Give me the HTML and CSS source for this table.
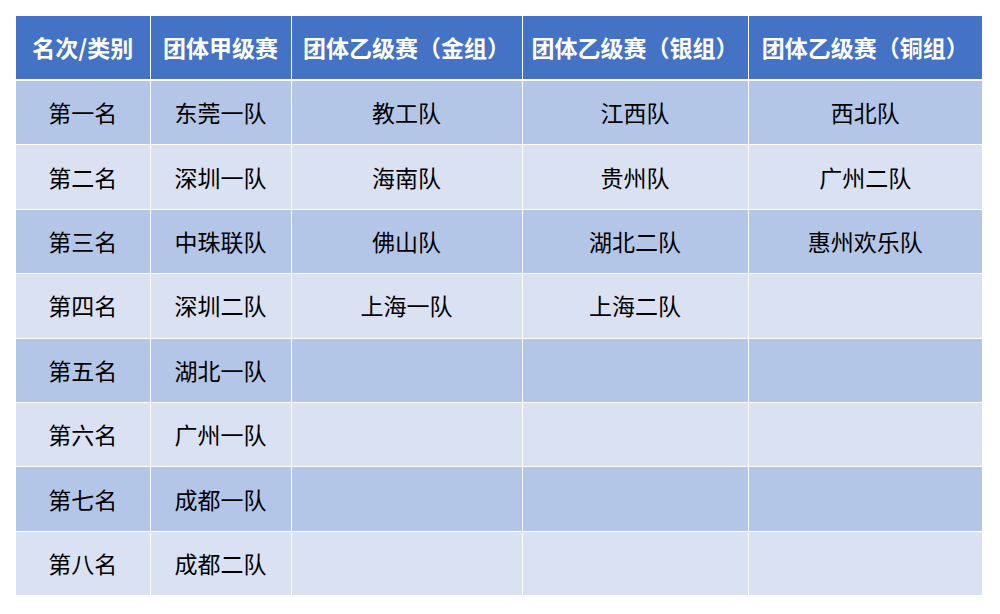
FILE: index.html
```html
<!DOCTYPE html>
<html lang="zh">
<head>
<meta charset="utf-8">
<link rel="stylesheet" href="styles.css">
</head>
<body>
<table class="rank">
  <colgroup>
    <col class="c1"><col class="c2"><col class="c3"><col class="c4"><col class="c5">
  </colgroup>
  <thead>
    <tr><th>名次/类别</th><th>团体甲级赛</th><th>团体乙级赛（金组）</th><th>团体乙级赛（银组）</th><th>团体乙级赛（铜组）</th></tr>
  </thead>
  <tbody>
    <tr class="dark"><td>第一名</td><td>东莞一队</td><td>教工队</td><td>江西队</td><td>西北队</td></tr>
    <tr class="light"><td>第二名</td><td>深圳一队</td><td>海南队</td><td>贵州队</td><td>广州二队</td></tr>
    <tr class="dark"><td>第三名</td><td>中珠联队</td><td>佛山队</td><td>湖北二队</td><td>惠州欢乐队</td></tr>
    <tr class="light"><td>第四名</td><td>深圳二队</td><td>上海一队</td><td>上海二队</td><td></td></tr>
    <tr class="dark"><td>第五名</td><td>湖北一队</td><td></td><td></td><td></td></tr>
    <tr class="light"><td>第六名</td><td>广州一队</td><td></td><td></td><td></td></tr>
    <tr class="dark"><td>第七名</td><td>成都一队</td><td></td><td></td><td></td></tr>
    <tr class="light"><td>第八名</td><td>成都二队</td><td></td><td></td><td></td></tr>
  </tbody>
</table>
</body>
</html>
```
FILE: styles.css
```css
html, body {
  margin: 0;
  padding: 0;
  background: #ffffff;
}
body {
  padding: 16px;
  font-family: "Noto Sans CJK SC", "Microsoft YaHei", sans-serif;
}
.rank {
  border-collapse: collapse;
  border-style: hidden;
  table-layout: fixed;
  width: 966px;
}
.c1 { width: 134px; }
.c2 { width: 141px; }
.c3 { width: 231px; }
.c4 { width: 226px; }
.c5 { width: 234px; }
.rank th, .rank td {
  border: 1px solid #ffffff;
  text-align: center;
  vertical-align: middle;
  padding: 0;
  font-size: 23px;
  line-height: 1;
  white-space: nowrap;
}
.rank th {
  background: #4472c4;
  color: #ffffff;
  font-weight: bold;
  height: 63px;
  border-bottom: 2px solid #ffffff;
}
.rank td {
  color: #000000;
  height: 63.4px;
}
.dark td { background: #b4c6e7; }
.light td { background: #d9e1f2; }
```
